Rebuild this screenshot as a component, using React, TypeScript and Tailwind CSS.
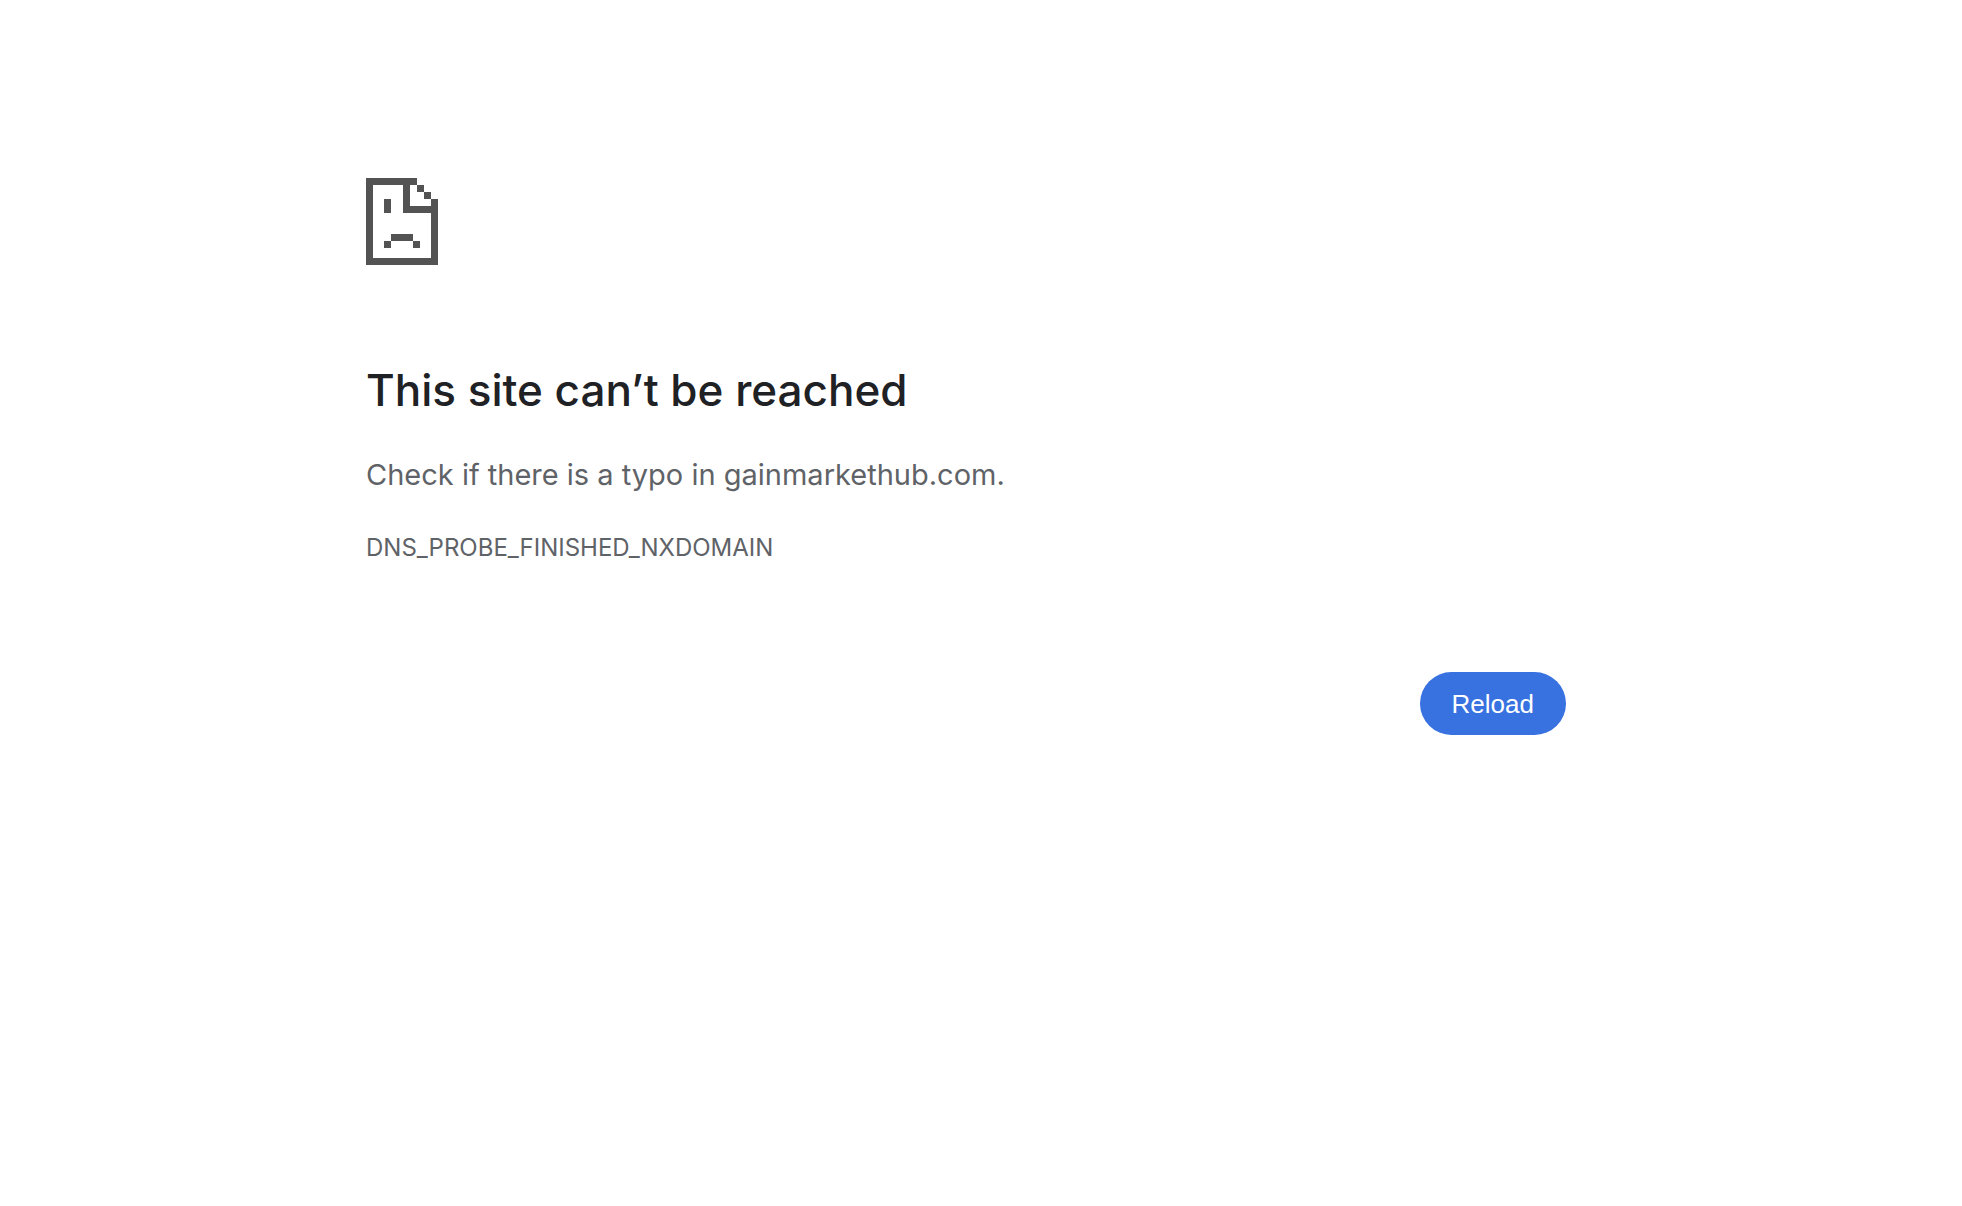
function SadPageIcon() {
  return (
    <svg
      width="72"
      height="87"
      viewBox="0 0 72 87"
      fill="#535353"
      shapeRendering="crispEdges"
      aria-hidden="true"
    >
      {/* Page outline */}
      <path d="M0 0H51V7H7V80H65V21H72V87H0Z" />
      {/* Folded corner */}
      <path d="M37 7H44V28H65V35H37Z" />
      <path d="M51 7H58V14H51Z" />
      <path d="M58 14H65V21H58Z" />
      {/* Face */}
      <path d="M18 21H25V35H18Z" />
      <path d="M25 56H47V63H25Z" />
      <path d="M18 63H25V70H18Z" />
      <path d="M47 63H54V70H47Z" />
    </svg>
  );
}

export default function App() {
  return (
    <div className="min-h-screen bg-white pr-[30px] font-['Inter',sans-serif] text-[#5f6368]">
      <main className="mx-auto max-w-[1200px] pt-[178px]">
        <SadPageIcon />

        <h1 className="mt-[95px] text-[44px] leading-[60px] font-medium text-[#202124]">
          This site can’t be reached
        </h1>
        <p className="mt-8 text-[29px] leading-[45px]">
          Check if there is a typo in gainmarkethub.com.
        </p>
        <p className="mt-7 text-[24px] leading-[45px]">DNS_PROBE_FINISHED_NXDOMAIN</p>

        <div className="mt-[102px] flex justify-end">
          <button
            type="button"
            onClick={() => window.location.reload()}
            className="h-[63px] cursor-pointer rounded-full bg-[#3871e0] px-8 font-['Liberation_Sans',sans-serif] text-[26px] leading-8 text-white"
          >
            Reload
          </button>
        </div>
      </main>
    </div>
  );
}
